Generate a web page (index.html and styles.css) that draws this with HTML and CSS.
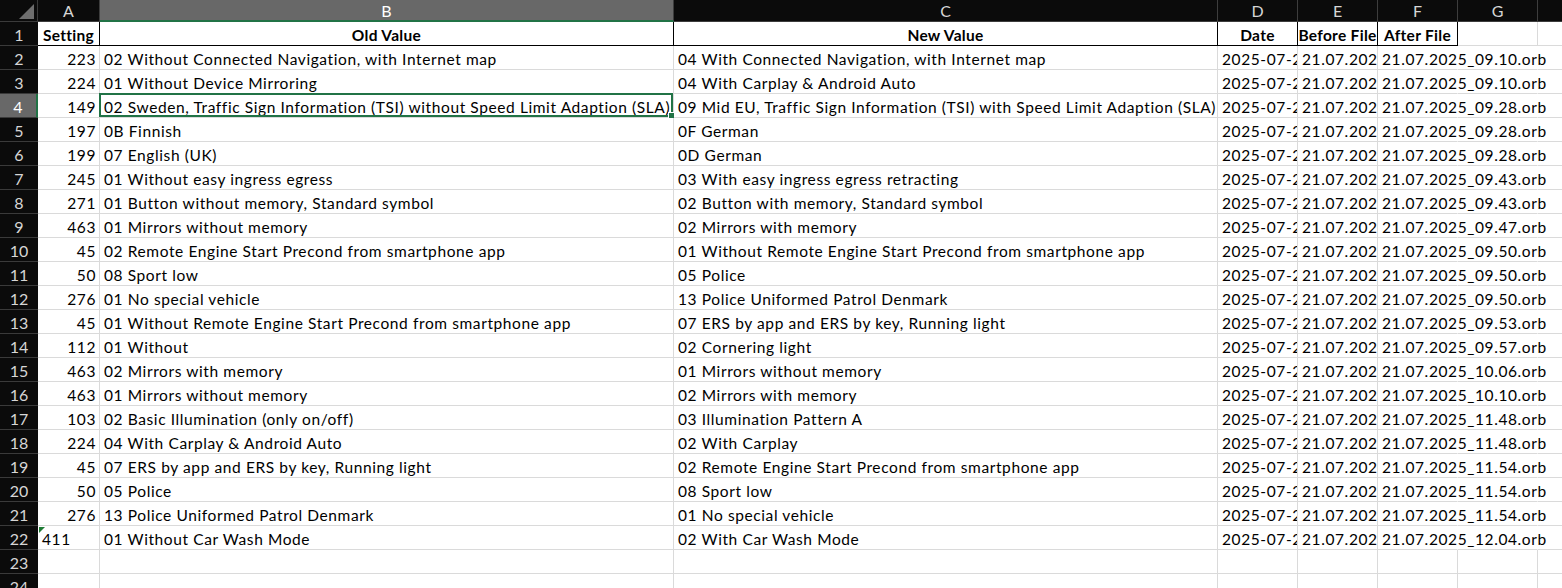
FILE: index.html
```html
<!DOCTYPE html>
<html>
<head>
<meta charset="utf-8">
<link rel="stylesheet" href="styles.css">
</head>
<body>
<div class="sheet">
  <div class="corner"><span class="tri"></span></div>
  <div class="ch">A</div><div class="ch sel">B</div><div class="ch">C</div><div class="ch">D</div><div class="ch">E</div><div class="ch">F</div><div class="ch">G</div><div class="ch"></div>

  <div class="rh">1</div><div class="c hd">Setting</div><div class="c hd">Old Value</div><div class="c hd">New Value</div><div class="c hd">Date</div><div class="c hd">Before File</div><div class="c hd">After File</div><div class="c"></div><div class="c"></div>

  <div class="rh">2</div><div class="c num">223</div><div class="c">02 Without Connected Navigation, with Internet map</div><div class="c">04 With Connected Navigation, with Internet map</div><div class="c clip">2025-07-21</div><div class="c clip">21.07.2025</div><div class="c spill">21.07.2025_09.10.orb</div><div class="c open"></div><div class="c open"></div>

  <div class="rh">3</div><div class="c num">224</div><div class="c">01 Without Device Mirroring</div><div class="c">04 With Carplay &amp; Android Auto</div><div class="c clip">2025-07-21</div><div class="c clip">21.07.2025</div><div class="c spill">21.07.2025_09.10.orb</div><div class="c open"></div><div class="c open"></div>

  <div class="rh rsel">4</div><div class="c num">149</div><div class="c active">02 Sweden, Traffic Sign Information (TSI) without Speed Limit Adaption (SLA)<span class="selbox"><span class="handle"></span></span></div><div class="c">09 Mid EU, Traffic Sign Information (TSI) with Speed Limit Adaption (SLA)</div><div class="c clip">2025-07-21</div><div class="c clip">21.07.2025</div><div class="c spill">21.07.2025_09.28.orb</div><div class="c open"></div><div class="c open"></div>

  <div class="rh">5</div><div class="c num">197</div><div class="c">0B Finnish</div><div class="c">0F German</div><div class="c clip">2025-07-21</div><div class="c clip">21.07.2025</div><div class="c spill">21.07.2025_09.28.orb</div><div class="c open"></div><div class="c open"></div>

  <div class="rh">6</div><div class="c num">199</div><div class="c">07 English (UK)</div><div class="c">0D German</div><div class="c clip">2025-07-21</div><div class="c clip">21.07.2025</div><div class="c spill">21.07.2025_09.28.orb</div><div class="c open"></div><div class="c open"></div>

  <div class="rh">7</div><div class="c num">245</div><div class="c">01 Without easy ingress egress</div><div class="c">03 With easy ingress egress retracting</div><div class="c clip">2025-07-21</div><div class="c clip">21.07.2025</div><div class="c spill">21.07.2025_09.43.orb</div><div class="c open"></div><div class="c open"></div>

  <div class="rh">8</div><div class="c num">271</div><div class="c">01 Button without memory, Standard symbol</div><div class="c">02 Button with memory, Standard symbol</div><div class="c clip">2025-07-21</div><div class="c clip">21.07.2025</div><div class="c spill">21.07.2025_09.43.orb</div><div class="c open"></div><div class="c open"></div>

  <div class="rh">9</div><div class="c num">463</div><div class="c">01 Mirrors without memory</div><div class="c">02 Mirrors with memory</div><div class="c clip">2025-07-21</div><div class="c clip">21.07.2025</div><div class="c spill">21.07.2025_09.47.orb</div><div class="c open"></div><div class="c open"></div>

  <div class="rh">10</div><div class="c num">45</div><div class="c">02 Remote Engine Start Precond from smartphone app</div><div class="c">01 Without Remote Engine Start Precond from smartphone app</div><div class="c clip">2025-07-21</div><div class="c clip">21.07.2025</div><div class="c spill">21.07.2025_09.50.orb</div><div class="c open"></div><div class="c open"></div>

  <div class="rh">11</div><div class="c num">50</div><div class="c">08 Sport low</div><div class="c">05 Police</div><div class="c clip">2025-07-21</div><div class="c clip">21.07.2025</div><div class="c spill">21.07.2025_09.50.orb</div><div class="c open"></div><div class="c open"></div>

  <div class="rh">12</div><div class="c num">276</div><div class="c">01 No special vehicle</div><div class="c">13 Police Uniformed Patrol Denmark</div><div class="c clip">2025-07-21</div><div class="c clip">21.07.2025</div><div class="c spill">21.07.2025_09.50.orb</div><div class="c open"></div><div class="c open"></div>

  <div class="rh">13</div><div class="c num">45</div><div class="c">01 Without Remote Engine Start Precond from smartphone app</div><div class="c">07 ERS by app and ERS by key, Running light</div><div class="c clip">2025-07-21</div><div class="c clip">21.07.2025</div><div class="c spill">21.07.2025_09.53.orb</div><div class="c open"></div><div class="c open"></div>

  <div class="rh">14</div><div class="c num">112</div><div class="c">01 Without</div><div class="c">02 Cornering light</div><div class="c clip">2025-07-21</div><div class="c clip">21.07.2025</div><div class="c spill">21.07.2025_09.57.orb</div><div class="c open"></div><div class="c open"></div>

  <div class="rh">15</div><div class="c num">463</div><div class="c">02 Mirrors with memory</div><div class="c">01 Mirrors without memory</div><div class="c clip">2025-07-21</div><div class="c clip">21.07.2025</div><div class="c spill">21.07.2025_10.06.orb</div><div class="c open"></div><div class="c open"></div>

  <div class="rh">16</div><div class="c num">463</div><div class="c">01 Mirrors without memory</div><div class="c">02 Mirrors with memory</div><div class="c clip">2025-07-21</div><div class="c clip">21.07.2025</div><div class="c spill">21.07.2025_10.10.orb</div><div class="c open"></div><div class="c open"></div>

  <div class="rh">17</div><div class="c num">103</div><div class="c">02 Basic Illumination (only on/off)</div><div class="c">03 Illumination Pattern A</div><div class="c clip">2025-07-21</div><div class="c clip">21.07.2025</div><div class="c spill">21.07.2025_11.48.orb</div><div class="c open"></div><div class="c open"></div>

  <div class="rh">18</div><div class="c num">224</div><div class="c">04 With Carplay &amp; Android Auto</div><div class="c">02 With Carplay</div><div class="c clip">2025-07-21</div><div class="c clip">21.07.2025</div><div class="c spill">21.07.2025_11.48.orb</div><div class="c open"></div><div class="c open"></div>

  <div class="rh">19</div><div class="c num">45</div><div class="c">07 ERS by app and ERS by key, Running light</div><div class="c">02 Remote Engine Start Precond from smartphone app</div><div class="c clip">2025-07-21</div><div class="c clip">21.07.2025</div><div class="c spill">21.07.2025_11.54.orb</div><div class="c open"></div><div class="c open"></div>

  <div class="rh">20</div><div class="c num">50</div><div class="c">05 Police</div><div class="c">08 Sport low</div><div class="c clip">2025-07-21</div><div class="c clip">21.07.2025</div><div class="c spill">21.07.2025_11.54.orb</div><div class="c open"></div><div class="c open"></div>

  <div class="rh">21</div><div class="c num">276</div><div class="c">13 Police Uniformed Patrol Denmark</div><div class="c">01 No special vehicle</div><div class="c clip">2025-07-21</div><div class="c clip">21.07.2025</div><div class="c spill">21.07.2025_11.54.orb</div><div class="c open"></div><div class="c open"></div>

  <div class="rh">22</div><div class="c txt">411<span class="warn"></span></div><div class="c">01 Without Car Wash Mode</div><div class="c">02 With Car Wash Mode</div><div class="c clip">2025-07-21</div><div class="c clip">21.07.2025</div><div class="c spill">21.07.2025_12.04.orb</div><div class="c open"></div><div class="c open"></div>

  <div class="rh">23</div><div class="c"></div><div class="c"></div><div class="c"></div><div class="c"></div><div class="c"></div><div class="c"></div><div class="c"></div><div class="c"></div>

  <div class="rh">24</div><div class="c"></div><div class="c"></div><div class="c"></div><div class="c"></div><div class="c"></div><div class="c"></div><div class="c"></div><div class="c"></div>
</div>
</body>
</html>
```

FILE: styles.css
```css
html, body {
  margin: 0;
  padding: 0;
  background: #ffffff;
  overflow: hidden;
}

.sheet {
  display: grid;
  grid-template-columns: 38px 62px 574px 544px 80px 80px 80px 80px 80px;
  grid-template-rows: 22px;
  grid-auto-rows: 24px;
  width: 1618px;
  font-family: Lato, "Liberation Sans", sans-serif;
  font-size: 15.5px;
  letter-spacing: 0.6px;
  color: #000000;
}

.corner {
  position: relative;
  background: #0b0b0b;
  border-right: 1px solid #3a3a3a;
  border-bottom: 1px solid #3a3a3a;
  box-sizing: border-box;
}

.corner .tri {
  position: absolute;
  right: 3px;
  bottom: 2px;
  width: 0;
  height: 0;
  border-left: 15px solid transparent;
  border-bottom: 15px solid #6e6e6e;
}

.ch {
  background: #0b0b0b;
  color: #d6d6d6;
  text-align: center;
  line-height: 21px;
  font-size: 16px;
  letter-spacing: 0;
  border-right: 1px solid #3d3d3d;
  border-bottom: 1px solid #3d3d3d;
  box-sizing: border-box;
}

.ch.sel {
  background: #686868;
  color: #ffffff;
  border-bottom: 2px solid #217346;
}

.rh {
  background: #0b0b0b;
  color: #d6d6d6;
  text-align: center;
  line-height: 22px;
  font-size: 16px;
  letter-spacing: 0;
  padding-top: 2px;
  border-bottom: 1px solid #3a3a3a;
  box-sizing: border-box;
}

.rh.rsel {
  background: #686868;
  color: #ffffff;
  border-right: 2px solid #217346;
}

.c {
  position: relative;
  box-sizing: border-box;
  border-right: 1px solid #dadada;
  border-bottom: 1px solid #dadada;
  padding: 2px 3px 0 4px;
  line-height: 22px;
  white-space: nowrap;
  overflow: hidden;
}

.c.num {
  text-align: right;
}

.c.hd {
  font-weight: 700;
  letter-spacing: 0.3px;
  text-align: center;
  border-right: 1px solid #000000;
  border-bottom: 1px solid #000000;
  padding-left: 0;
  padding-right: 0;
}

.c.clip {
  overflow: hidden;
}

.c.spill {
  overflow: visible;
  border-right-color: transparent;
}

.c.open {
  background: transparent;
  border-right-color: transparent;
}

.c.active {
  overflow: visible;
}

.selbox {
  position: absolute;
  left: -1px;
  top: -1px;
  right: 0;
  bottom: 0;
  border: 2px solid #217346;
  pointer-events: none;
}

.handle {
  position: absolute;
  right: -4px;
  bottom: -4px;
  width: 5px;
  height: 5px;
  background: #217346;
  border: 1px solid #ffffff;
}

.warn {
  position: absolute;
  left: 1px;
  top: 1px;
  width: 0;
  height: 0;
  border-top: 6px solid #1e7b34;
  border-right: 6px solid transparent;
}
```
